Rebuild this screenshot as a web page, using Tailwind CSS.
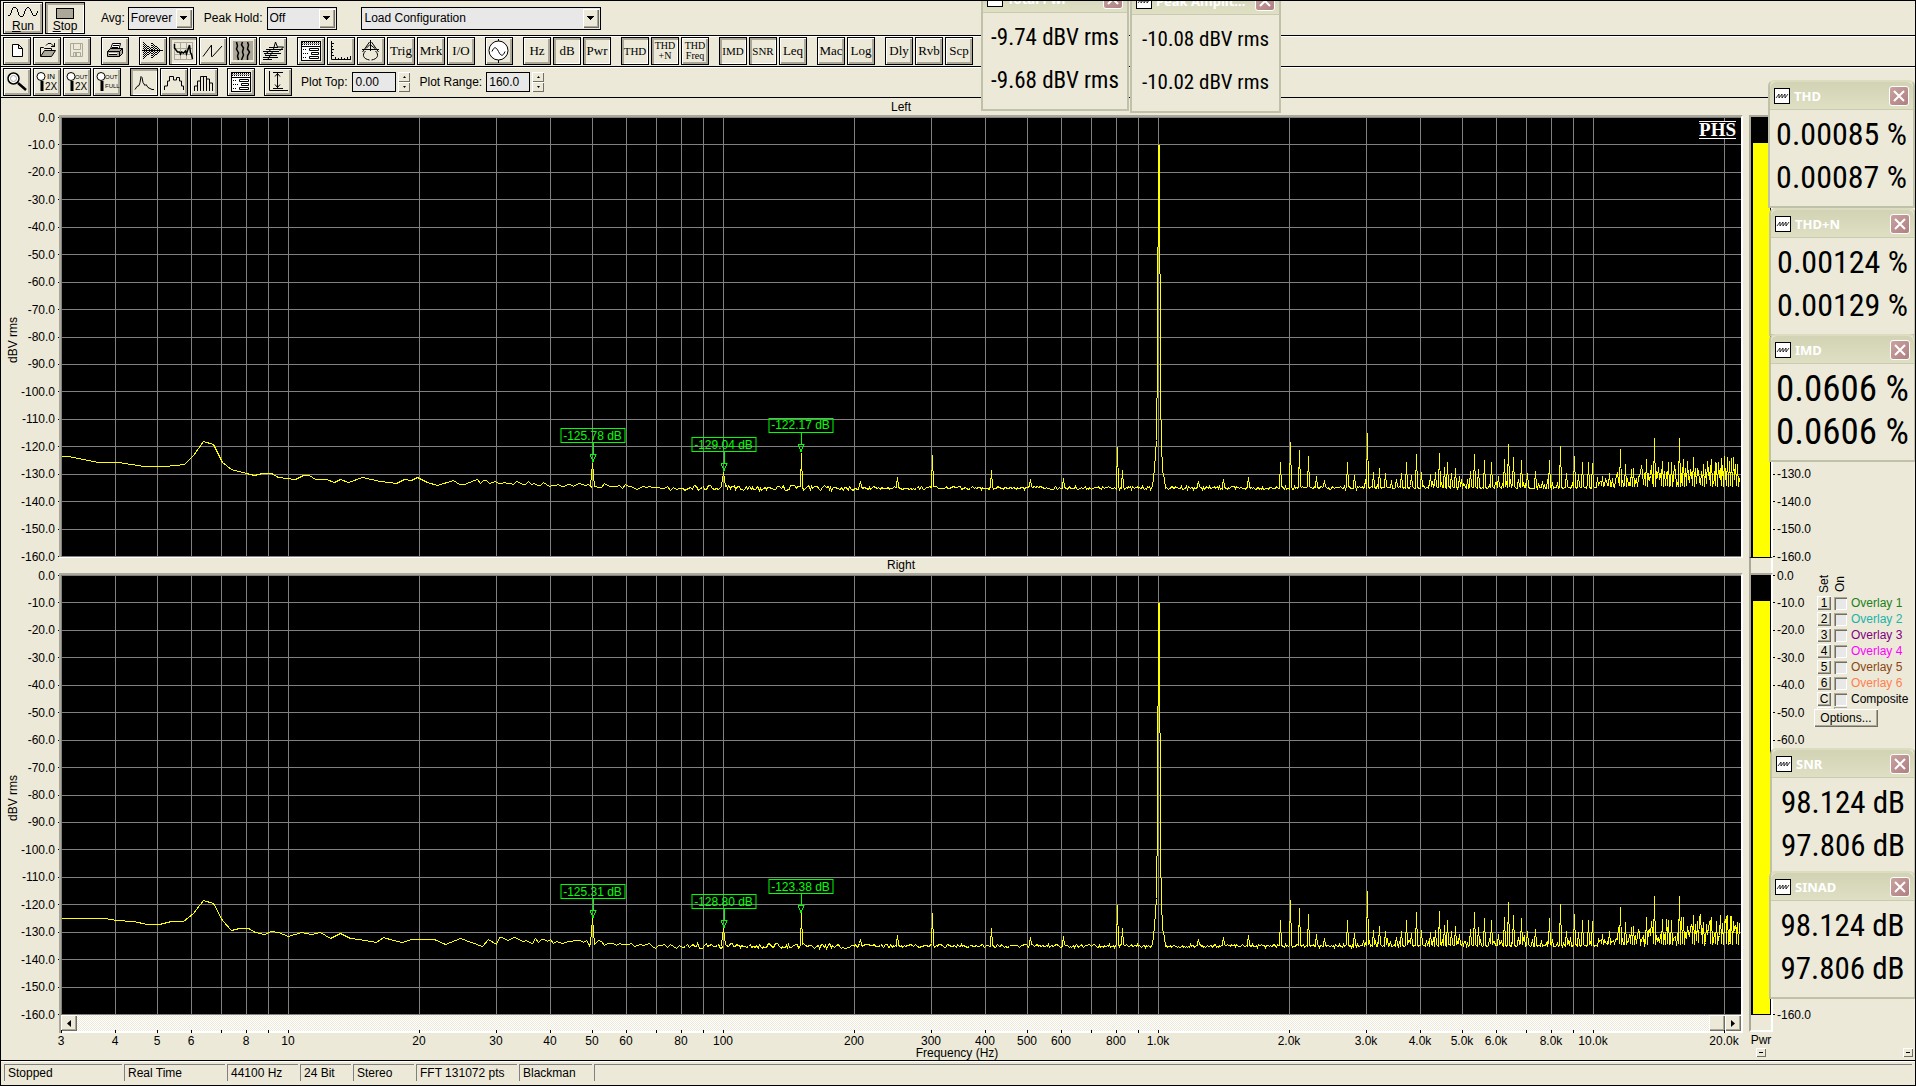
<!DOCTYPE html>
<html lang="en">

<head>
    <meta charset="UTF-8">
    <meta name="viewport" content="width=device-width, initial-scale=1.0">
    <title>Spectrum Analyzer</title>
    <script src="https://cdn.jsdelivr.net/npm/@tailwindcss/browser@4"></script>
</head>

<body class="bg-[#ece9d8]">
    <div class="relative h-screen flex flex-col overflow-hidden border border-black bg-[#ece9d8] font-['Liberation_Sans',Arial,sans-serif] text-[12px] leading-4 text-black">

        <!-- Row 1: run / stop and averaging -->
        <div class="flex h-[35px] shrink-0 items-center border-b border-black px-0.5">
            <button type="button" class="flex h-8 w-10 flex-col items-center border border-black shadow-[inset_1px_1px_0_#fff,inset_-2px_-2px_0_#aca899]">
                <svg class="h-4 w-8 shrink-0" viewBox="0 0 32 16" fill="none" stroke="#000" shape-rendering="crispEdges">
                    <path d="M1 13l2-1 3-7 2-1 2 2 2 6 2 2 2-1 3-7 2-2 2 2 3 6 1 1 2-1 2-4" />
                </svg>
                <span class="leading-3.5"><u>R</u>un</span>
            </button>
            <button type="button" class="ml-0.5 flex h-8 w-10 flex-col items-center border border-black shadow-[inset_2px_2px_0_#aca899,inset_-1px_-1px_0_#fff]">
                <span class="mt-[5px] h-[11px] w-[18px] shrink-0 border border-black bg-[#aca899]"></span>
                <span class="leading-3.5"><u>S</u>top</span>
            </button>
            <label for="avg" class="ml-4">Avg:</label>
            <div class="relative ml-[3px]">
                <select id="avg" class="block h-[23px] w-[66px] appearance-none border border-black bg-[#e8e8e8] pl-0.5">
                    <option>Forever</option>
                </select>
                <span class="pointer-events-none absolute right-0.5 top-0.5 flex h-[19px] w-4 items-center justify-center bg-[#ece9d8] shadow-[inset_1px_1px_0_#fff,inset_-1px_-1px_0_#716f64,inset_-2px_-2px_0_#aca899]">
                    <svg class="h-1 w-[7px]" viewBox="0 0 7 4" shape-rendering="crispEdges"><path d="M0 0h7L3.500 4z" /></svg>
                </span>
            </div>
            <label for="peak" class="ml-2.5">Peak Hold:</label>
            <div class="relative ml-1">
                <select id="peak" class="block h-[23px] w-[70px] appearance-none border border-black bg-[#e8e8e8] pl-0.5">
                    <option>Off</option>
                </select>
                <span class="pointer-events-none absolute right-0.5 top-0.5 flex h-[19px] w-4 items-center justify-center bg-[#ece9d8] shadow-[inset_1px_1px_0_#fff,inset_-1px_-1px_0_#716f64,inset_-2px_-2px_0_#aca899]">
                    <svg class="h-1 w-[7px]" viewBox="0 0 7 4" shape-rendering="crispEdges"><path d="M0 0h7L3.500 4z" /></svg>
                </span>
            </div>
            <div class="relative ml-6">
                <select aria-label="Load Configuration" class="block h-[23px] w-[240px] appearance-none border border-black bg-[#e8e8e8] pl-[3px]">
                    <option>Load Configuration</option>
                </select>
                <span class="pointer-events-none absolute right-0.5 top-0.5 flex h-[19px] w-4 items-center justify-center bg-[#ece9d8] shadow-[inset_1px_1px_0_#fff,inset_-1px_-1px_0_#716f64,inset_-2px_-2px_0_#aca899]">
                    <svg class="h-1 w-[7px]" viewBox="0 0 7 4" shape-rendering="crispEdges"><path d="M0 0h7L3.500 4z" /></svg>
                </span>
            </div>
        </div>

        <!-- Row 2: filled from the tools list -->
        <div id="tools" class="flex h-[31px] shrink-0 items-center gap-2.5 border-b border-black px-0.5 shadow-[inset_0_1px_0_#fff]"></div>

        <!-- Row 3: zoom, plot style and range -->
        <div class="flex h-[31px] shrink-0 items-center border-b border-black px-0.5 shadow-[inset_0_1px_0_#fff]">
            <div id="zoomTools" class="flex gap-[9px]"></div>
            <label for="plotTop" class="ml-[9px]">Plot Top:</label>
            <input id="plotTop" type="text" value="0.00" class="ml-[5px] h-5 w-11 border border-black bg-[#e8e8e8] px-0.5">
            <div class="ml-0.5 flex w-3 flex-col">
                <button type="button" aria-label="Top up" class="flex h-2.5 items-center justify-center shadow-[inset_1px_1px_0_#fff,inset_-1px_-1px_0_#716f64]"><svg class="h-0.5 w-[3px]" viewBox="0 0 3 2"><path d="M0 2h3L1.500 0z" /></svg></button>
                <button type="button" aria-label="Top down" class="flex h-2.5 items-center justify-center shadow-[inset_1px_1px_0_#fff,inset_-1px_-1px_0_#716f64]"><svg class="h-0.5 w-[3px]" viewBox="0 0 3 2"><path d="M0 0h3L1.500 2z" /></svg></button>
            </div>
            <label for="plotRange" class="ml-[9px]">Plot Range:</label>
            <input id="plotRange" type="text" value="160.0" class="ml-1 h-5 w-11 border border-black bg-[#e8e8e8] px-0.5">
            <div class="ml-0.5 flex w-3 flex-col">
                <button type="button" aria-label="Range up" class="flex h-2.5 items-center justify-center shadow-[inset_1px_1px_0_#fff,inset_-1px_-1px_0_#716f64]"><svg class="h-0.5 w-[3px]" viewBox="0 0 3 2"><path d="M0 2h3L1.500 0z" /></svg></button>
                <button type="button" aria-label="Range down" class="flex h-2.5 items-center justify-center shadow-[inset_1px_1px_0_#fff,inset_-1px_-1px_0_#716f64]"><svg class="h-0.5 w-[3px]" viewBox="0 0 3 2"><path d="M0 0h3L1.500 2z" /></svg></button>
            </div>
        </div>

        <!-- Plots, level meter and overlay panel -->
        <main class="grid min-h-0 flex-1 grid-cols-[58px_1fr_6px_24px_142px] grid-rows-[17px_1fr_16px_1fr_45px]">
            <h2 class="col-start-2 text-center leading-[18px]">Left</h2>

            <div class="col-start-1 row-start-2 flex">
                <span class="ml-1 mt-2 w-4 rotate-180 self-center text-center [writing-mode:vertical-rl]">dBV rms</span>
                <div data-scale="left" class="flex flex-1 flex-col justify-between pt-0.5"></div>
            </div>
            <div class="relative col-start-2 row-start-2 border-x-2 border-t-2 border-l-[#aca899] border-r-white border-t-[#aca899] bg-black">
                <svg data-plot="left" class="block h-full w-full" viewBox="0 0 1680 440" preserveAspectRatio="none" shape-rendering="crispEdges"></svg>
                <div data-markers="left" class="absolute inset-0"></div>
                <span class="absolute right-[5px] top-1 border-y border-white bg-black font-['Liberation_Serif',serif] text-[19px] font-bold leading-4 text-white">PHS</span>
            </div>
            <div class="col-start-4 row-start-2 flex flex-col border-x-2 border-t-2 border-l-[#aca899] border-r-white border-t-[#aca899] bg-black pr-px pl-0.5">
                <div class="h-[6%]"></div>
                <div class="flex-1 bg-[#ffff00]"></div>
            </div>
            <div data-scale="right" data-labels="13 14 15 16" class="col-start-5 row-start-2 flex flex-col justify-between pt-0.5"></div>

            <h2 class="col-start-2 row-start-3 border-t border-white text-center leading-3.5">Right</h2>
            <div class="col-start-4 row-start-3 border-x-2 border-t border-l-[#aca899] border-r-white border-t-black"></div>

            <div class="col-start-1 row-start-4 flex">
                <span class="ml-1 mt-2 w-4 rotate-180 self-center text-center [writing-mode:vertical-rl]">dBV rms</span>
                <div data-scale="left" class="flex flex-1 flex-col justify-between pt-0.5"></div>
            </div>
            <div class="relative col-start-2 row-start-4 border-x-2 border-t-2 border-l-[#aca899] border-r-white border-t-[#aca899] bg-black">
                <svg data-plot="right" class="block h-full w-full" viewBox="0 0 1680 440" preserveAspectRatio="none" shape-rendering="crispEdges"></svg>
                <div data-markers="right" class="absolute inset-0"></div>
            </div>
            <div class="col-start-4 row-start-4 flex flex-col border-x-2 border-t-2 border-l-[#aca899] border-r-white border-t-[#aca899] bg-black pr-px pb-px pl-0.5">
                <div class="h-[6%]"></div>
                <div class="flex-1 bg-[#ffff00]"></div>
            </div>
            <div class="col-start-5 row-start-4 flex">
                <div data-scale="right" data-labels="0 1 2 3 4 5 6 16" class="flex w-[41px] flex-col justify-between pt-0.5"></div>
                <div class="flex flex-col items-start">
                    <div class="flex h-[22px] items-center pl-0.5">
                        <span class="w-4 rotate-180 [writing-mode:vertical-rl]">Set</span>
                        <span class="w-4 rotate-180 [writing-mode:vertical-rl]">On</span>
                    </div>
                    <div id="overlays" class="flex flex-col pl-[3px]"></div>
                    <button type="button" class="relative h-[18px] w-16 bg-[#ece9d8] shadow-[inset_1px_1px_0_#fff,inset_-1px_-1px_0_#716f64,inset_-2px_-2px_0_#aca899]">Options...</button>
                </div>
            </div>

            <!-- Scroll bar and frequency axis -->
            <div class="col-start-2 row-start-5">
                <div class="flex h-4 border-x-2 border-l-[#aca899] border-r-white bg-[repeating-conic-gradient(#fff_0_25%,#ece9d8_0_50%)] bg-[length:2px_2px]">
                    <button type="button" aria-label="Scroll left" class="flex w-4 items-center justify-center bg-[#ece9d8] shadow-[inset_1px_1px_0_#fff,inset_-1px_-1px_0_#716f64,inset_-2px_-2px_0_#aca899]"><svg class="h-[7px] w-1" viewBox="0 0 4 7"><path d="M4 0v7L0 3.500z" /></svg></button>
                    <div class="flex-1"></div>
                    <div class="w-4 bg-[#ece9d8] shadow-[inset_1px_1px_0_#fff,inset_-1px_-1px_0_#716f64,inset_-2px_-2px_0_#aca899]"></div>
                    <button type="button" aria-label="Scroll right" class="flex w-4 items-center justify-center bg-[#ece9d8] shadow-[inset_1px_1px_0_#fff,inset_-1px_-1px_0_#716f64,inset_-2px_-2px_0_#aca899]"><svg class="h-[7px] w-1" viewBox="0 0 4 7"><path d="M0 0v7l4-3.500z" /></svg></button>
                </div>
                <div class="h-0.5 border-x-2 border-l-[#aca899] border-r-white bg-white"></div>
                <div id="freqAxis" class="relative mx-0.5 h-3.5"></div>
                <p class="pl-28 text-center leading-3">Frequency (Hz)</p>
            </div>
            <div class="col-start-4 row-start-5 flex flex-col items-center">
                <div class="h-[17px] w-full border-x-2 border-b-2 border-l-[#aca899] border-r-white border-b-white"></div>
                <span class="leading-4">Pwr</span>
                <button type="button" aria-label="Collapse meter" class="flex h-[9px] w-2.5 items-center justify-center shadow-[inset_1px_1px_0_#fff,inset_-1px_-1px_0_#716f64]"><span class="h-px w-1 bg-black"></span></button>
            </div>
            <div class="col-start-5 row-start-5 flex items-start justify-end pt-[33px] pr-0.5">
                <button type="button" aria-label="Collapse panel" class="flex h-[9px] w-2.5 items-center justify-center shadow-[inset_1px_1px_0_#fff,inset_-1px_-1px_0_#716f64]"><span class="h-px w-1 bg-black"></span></button>
            </div>
        </main>

        <!-- Status bar -->
        <footer class="flex h-[25px] shrink-0 gap-0.5 border-t border-black px-[3px] pt-[3px] pb-1 shadow-[inset_0_1px_0_#fff]">
            <span class="w-[118px] border-l border-t border-[#808080] pl-[3px]">Stopped</span>
            <span class="w-[101px] border-l border-t border-[#808080] pl-[3px]">Real Time</span>
            <span class="w-[71px] border-l border-t border-[#808080] pl-[3px]">44100 Hz</span>
            <span class="w-[51px] border-l border-t border-[#808080] pl-[3px]">24 Bit</span>
            <span class="w-[61px] border-l border-t border-[#808080] pl-[3px]">Stereo</span>
            <span class="w-[101px] border-l border-t border-[#808080] pl-[3px]">FFT 131072 pts</span>
            <span class="w-[73px] border-l border-t border-[#808080] pl-[3px]">Blackman</span>
            <span class="flex-1 border-l border-t border-[#808080]"></span>
        </footer>

        <!-- Floating readouts -->
        <div id="windows"></div>
    </div>

    <script>
        // Toolbar definitions: each inner array is one group
        const panelIcon = '<rect x="4.500" y="4.500" width="19" height="19" fill="#fff"/><path d="M5 5.500h18M5 7.500h18" stroke-dasharray="1 1"/><path d="M5 6.500h18" stroke="#aca899"/><path d="M5 9.500h18"/><path d="M12.500 11.500h9v2h-9zM14.500 15.500h7v2h-7zM12.500 19.500h9v2h-9z"/><path d="M6 12.500h4M6 16.500h6M6 20.500h4" stroke-dasharray="1 1"/>';
        const tools = [
            [
                { name: 'New', icon: '<path d="M9.500 7.500h6l4 4v8h-10zM15.500 7.500v4h4" fill="#fff"/>' },
                { name: 'Open', icon: '<path d="M7.500 19v-8.500h3l1 1h7V14" /><path d="M7.500 19.500l4-6h11l-4 6z" fill="#aca899"/><path d="M13 8.500l2-2h3l3 3M21.500 6v4M18 9.500h4"/>' },
                { name: 'Save', icon: '<g stroke="#aca899"><path d="M7.500 6.500h12v13h-12zM10.500 7v5.500h7V7M10.500 19.500v-4h7v4"/><path d="M12 17.500h2" stroke-width="3"/></g>' }
            ],
            [
                { name: 'Print', icon: '<path d="M9.500 12l2-5.500h8L18 12" fill="#fff"/><path d="M12 8.500h6M11 10.500h6"/><path d="M6.500 14.500l3-3h12v5l-3 3h-12z" fill="#aca899"/><path d="M6.500 14.500h12v5M18.500 14.500l3-3M8 17.500h8"/><path d="M8 16.500h8" stroke="#fff"/>' }
            ],
            [
                { name: 'Time series', icon: '<path d="M3 13.500h21"/><path d="M4.500 5v17M5.500 6v15M6.500 7v13M7.500 8v12M8.500 9v10M9.500 9v9M10.500 10v7M11.500 11v5M12.500 6v15M13.500 6v15M14.500 7v13M15.500 8v11M16.500 9v10M17.500 9v9M18.500 10v7M19.500 11v5M20.500 12v3" stroke-dasharray="1 1"/>' },
                { name: 'Spectrum', on: 1, icon: '<path d="M5.500 5v18M11.500 5v18M17.500 5v18M23.500 5v18M5 5.500h19M5 11.500h19M5 17.500h19M5 22.500h19" stroke="#aca899"/><path d="M5.500 7v4l3 4h2l1 2 1-2 2 1 2-2 1 3 3-9 1 8 1 1 1 5" stroke-width="1.500"/>' },
                { name: 'Phase', icon: '<path d="M4 19.500L12.500 8v11.500h1L23 9"/>' },
                { name: 'Spectrogram', icon: '<rect x="4" y="4" width="20" height="19" fill="#aca899" stroke="none"/><path d="M7.500 5l1 4-1 3 2 4-1 3 1 4M13.500 5l-1 3 2 3-1 4 1 3-2 5M18.500 5l1 3-1 4 2 3-2 4v4" stroke-width="1.500"/>' },
                { name: '3D surface', icon: '<path d="M10 10.500h9M7 12.500h17M8 14.500h12M5 16.500h17M6 18.500h12M4 20.500h15M4 22.500h9"/><path d="M4 14.500h5M14.500 12l2-7 2 5h6l-4 4M6 17.500l6-5M9 22l5-8"/>' }
            ],
            [
                { name: 'Options', icon: panelIcon },
                { name: 'Scaling', icon: '<path d="M4.500 4v18.500H24M5 6.500h2M5 9.500h1M5 12.500h2M5 15.500h1M5 18.500h2M8.500 22v-2M11.500 22v-1M14.500 22v-2M17.500 22v-1M20.500 22v-2M23.500 22v-3"/>' },
                { name: 'Calibration', icon: '<path d="M13.500 3v11M12.500 5l-7 10M14.500 5l7 10M5 12.500h17M9 11.500l4-4 5 4"/><path d="M8.500 14c-4 4-2 8 4 9M18.500 14c4 4 2 8-4 9"/>' },
                { name: 'Trig', text: 'Trig' }, { name: 'Markers', text: 'Mrk' }, { name: 'Devices', text: 'I/O' }
            ],
            [
                { name: 'Generator', icon: '<path d="M13.500 2v24"/><circle cx="13.500" cy="13.500" r="9.500" fill="#fff"/><path d="M7 14.500c2-5 4-5 6.500 0s4.500 5 6.500 0"/>' }
            ],
            [{ name: 'Hz', text: 'Hz' }, { name: 'dB', text: 'dB', on: 1 }, { name: 'Pwr', text: 'Pwr', on: 1 }],
            [{ name: 'THD', small: 'THD', on: 1 }, { name: 'THD+N', two: ['THD', '+N'], on: 1 }, { name: 'THD Freq', two: ['THD', 'Freq'] }],
            [{ name: 'IMD', small: 'IMD', on: 1 }, { name: 'SNR', small: 'SNR', on: 1 }, { name: 'Leq', text: 'Leq' }],
            [{ name: 'Macro', text: 'Mac' }, { name: 'Log', text: 'Log' }],
            [{ name: 'Delay', text: 'Dly' }, { name: 'Reverb', text: 'Rvb' }, { name: 'Scope', text: 'Scp' }]
        ];
        const lens = '<circle cx="8" cy="8.500" r="4" fill="#fff"/><path d="M9 13v10" stroke-width="3"/>';
        const iconText = (a, b) => `<g fill="#000" stroke="none" font-family="Liberation Sans"><text x="${a.length > 2 ? 12 : 14}" y="11" font-size="${a.length > 2 ? 6 : 8}">${a}</text><text x="12" y="${b.length > 2 ? 20 : 22}" font-size="${b.length > 2 ? 6 : 10}">${b}</text></g>`;
        const zoomTools = [
            [
                { name: 'Zoom', icon: '<circle cx="10.500" cy="10.500" r="5.500" fill="#fff" stroke-width="1.500"/><circle cx="10.500" cy="10.500" r="3" fill="none" stroke="#aca899"/><path d="M15 15l8 7" stroke-width="2.500"/>' },
                { name: 'Zoom in 2X', icon: lens + iconText('IN', '2X') },
                { name: 'Zoom out 2X', icon: lens + iconText('OUT', '2X') },
                { name: 'Zoom out full', icon: lens + iconText('OUT', 'FULL') }
            ],
            [
                { name: 'Line', on: 1, icon: '<path d="M5 21.500l2-3 2-1 1-3 1-6 1 1 1 5 2 3 1-1 2 3 4 2h2"/>' },
                { name: 'Steps', icon: '<path d="M4.500 22v-4h3v-5h2V8.500h4V12h3V9.500h3V13h2v5h2v4"/>' },
                { name: 'Bars', icon: '<path d="M4.500 23v-5h3v-5h3V8.500h3h3V11h3v4h3v8M7.500 23V13M10.500 23V9M13.500 23V8M16.500 23V8M19.500 23V14"/>' }
            ],
            [{ name: 'Display options', icon: panelIcon }],
            [{ name: 'Autoscale', icon: '<path d="M5.500 3v19.500H24M9 4.500h10M9 20.500h10M13.500 5v15M11 8.500l2.500-3 2.500 3M11 16.500l2.500 3 2.500-3"/>' }]
        ];

        function toolButton(t) {
            const edge = t.on
                ? 'shadow-[inset_2px_2px_0_#aca899,inset_-1px_-1px_0_#fff]'
                : 'shadow-[inset_1px_1px_0_#fff,inset_-2px_-2px_0_#aca899]';
            let inner;
            if (t.icon) inner = `<svg class="h-[26px] w-[26px] shrink-0" viewBox="1 1 26 26" fill="none" stroke="#000">${t.icon}</svg>`;
            else if (t.two) inner = `<span class="flex flex-col text-[10px] leading-[10px]"><span>${t.two[0]}</span><span>${t.two[1]}</span></span>`;
            else if (t.small) inner = `<span class="text-[11px]">${t.small}</span>`;
            else inner = `<span class="text-[13px]">${t.text}</span>`;
            return `<button type="button" aria-label="${t.name}" class="flex h-7 w-7 items-center justify-center border border-black font-['Liberation_Serif',serif] ${edge}">${inner}</button>`;
        }
        const groups = list => list.map(g => `<div class="flex gap-0.5">${g.map(toolButton).join('')}</div>`).join('');
        document.getElementById('tools').innerHTML = groups(tools);
        document.getElementById('zoomTools').innerHTML = groups(zoomTools);

        // dB scales; the right one only labels what the readouts leave free
        document.querySelectorAll('[data-scale]').forEach(el => {
            const only = el.dataset.labels ? el.dataset.labels.split(' ').map(Number) : null;
            for (let i = 0; i <= 16; i++) {
                const text = !only || only.includes(i) ? (i ? -i * 10 : 0).toFixed(1) : '';
                el.innerHTML += el.dataset.scale === 'left'
                    ? `<div class="flex h-px items-center justify-end gap-[3px]"><span>${text}</span><span class="h-px w-px bg-black"></span></div>`
                    : `<div class="flex h-px items-center gap-0.5"><span class="h-px w-0.5 bg-black"></span><span>${text}</span></div>`;
            }
        });

        // Log frequency axis, 3 Hz at the left edge
        const fx = f => Math.round(227 + 435 * Math.log10(f / 10)) + 0.5;
        const freqs = [];
        for (let d = 1; d <= 10000; d *= 10) {
            for (let k = 1; k < 10; k++) {
                if (k * d >= 3 && k * d <= 20000) freqs.push(k * d);
            }
        }
        let axis = '';
        freqs.forEach(f => {
            const left = (fx(f) - 0.5) / 16.8;
            const lead = Number(String(f)[0]);
            axis += `<span class="absolute -top-[3px] h-[3px] w-px bg-black" style="left:${left}%"></span>`;
            if (lead !== 7 && lead !== 9) {
                const text = f >= 1000 ? (f / 1000).toFixed(1) + 'k' : f;
                axis += `<span class="absolute top-0 -translate-x-1/2" style="left:${left}%">${text}</span>`;
            }
        });
        document.getElementById('freqAxis').innerHTML = axis;

        // Spectrum data in plot units (1680 x 440)
        const lowEnd = {
            left: [[0, 339], [7, 339], [17, 341], [37, 345], [57, 345], [83, 349], [104, 349], [123, 347], [132, 338], [142, 324], [152, 327], [161, 345], [170, 352], [185, 356], [193, 358], [201, 356], [210, 356], [217, 360], [234, 362], [242, 358], [248, 358], [254, 362], [265, 362], [273, 365], [279, 362], [287, 365], [301, 360], [319, 364], [335, 366], [343, 362], [350, 363], [356, 360], [366, 365], [376, 368], [392, 363], [398, 367], [403, 367], [413, 363]],
            right: [[0, 343], [43, 343], [55, 345], [72, 346], [86, 349], [98, 349], [110, 346], [122, 346], [132, 338], [142, 325], [152, 328], [161, 345], [170, 355], [178, 353], [187, 353], [194, 357], [203, 359], [210, 356], [217, 357], [227, 361], [240, 357], [250, 359], [259, 357], [269, 363], [279, 358], [289, 363], [297, 364], [315, 367], [322, 362], [332, 365], [341, 367], [350, 364], [373, 364], [384, 369], [399, 363], [410, 367], [421, 371], [427, 364], [435, 369]]
        };
        const hum = {
            left: [[531, 346], [662, 355], [740, 336]],
            right: [[531, 343], [662, 353], [740, 338]]
        };
        const peaks = [[799, 364], [836, 360], [871, 338], [930, 353], [969, 362], [1002, 361], [1056, 330], [1061, 353], [1137, 364], [1162, 362], [1187, 360], [1219, 345], [1229, 325], [1238, 333], [1247, 339], [1255, 359], [1263, 363], [1286, 345], [1293, 358], [1306, 316], [1312, 355], [1318, 351], [1324, 356], [1335, 362], [1340, 356], [1345, 345], [1350, 358], [1355, 337], [1360, 355], [1369, 357], [1374, 355], [1378, 336], [1383, 350], [1386, 345], [1390, 356], [1394, 351], [1398, 359], [1409, 354], [1413, 337], [1417, 352], [1423, 343], [1430, 345], [1437, 359], [1443, 342], [1447, 327], [1452, 340], [1457, 362], [1460, 343], [1466, 356], [1474, 354], [1488, 343], [1499, 329], [1505, 356], [1513, 339], [1517, 357], [1521, 345], [1527, 345], [1531, 346], [1541, 359], [1548, 356], [1559, 332], [1564, 347], [1570, 352], [1572, 351], [1585, 342], [1593, 321], [1601, 344], [1607, 345], [1610, 345], [1618, 321], [1622, 342], [1632, 340], [1642, 347], [1650, 342], [1655, 346], [1661, 348], [1666, 340], [1670, 341], [1676, 347]];
        const carrier = [[1091, 369], [1093, 351], [1095, 323], [1096, 240], [1097, 28], [1098, 28], [1099, 280], [1100, 325], [1101, 353], [1103, 362], [1104, 371]];

        function trace(side) {
            let seed = side === 'left' ? 7 : 23;
            const rnd = () => (seed = (seed * 16807) % 2147483647) / 2147483647;
            const pts = lowEnd[side].slice();
            const tips = new Map([...hum[side], ...peaks]);
            const start = pts[pts.length - 1][0];
            for (let x = start + 3; x < 1679; x++) {
                if (x >= 1091 && x <= 1104) {
                    if (x === 1091) pts.push(...carrier);
                    continue;
                }
                if (tips.has(x)) {
                    const wide = x < 700 ? 2 : 1;
                    pts.push([x - wide, 368], [x, tips.get(x)], [x + wide, 369]);
                    x += wide;
                    continue;
                }
                const base = x < 580 ? 364 + (x - start) / 28 : 370.5;
                const wobble = x < 800 ? 5 : x < 1300 ? 3 : 2;
                let y = Math.min(base, 370.5) + (rnd() - 0.5) * wobble;
                if (x > 1300 && rnd() < 0.3) y -= rnd() * 9;
                if (x > 1535) y -= rnd() * (x - 1490) / 6;
                if (x > 1625) y -= rnd() * 5;
                pts.push([x, Math.round(y)]);
                // Points are further apart at low frequencies, but never step over a peak
                const skip = x < 620 ? 2 : x < 1000 && rnd() < 0.5 ? 1 : 0;
                for (let s = 0; s < skip && !tips.has(x + 1); s++) x++;
            }
            return pts.map(p => `${p[0] + 0.5},${p[1] + 0.5}`).join(' ');
        }

        document.querySelectorAll('[data-plot]').forEach(svg => {
            let grid = '';
            for (let i = 0; i <= 16; i++) grid += `M0 ${Math.round(i * 439 / 16) + 0.5}H1680`;
            freqs.forEach(f => grid += `M${fx(f)} 0V440`);
            svg.innerHTML = `<path d="${grid}" stroke="#808080" fill="none" vector-effect="non-scaling-stroke"/>
                <polyline points="${trace(svg.dataset.plot)}" stroke="#ffff00" fill="none" vector-effect="non-scaling-stroke"/>`;
        });

        // Peak markers
        const markers = {
            left: [[531.5, 311, '-125.78 dB'], [662.5, 320, '-129.04 dB'], [739.5, 301, '-122.17 dB']],
            right: [[531.5, 309, '-125.31 dB'], [662.5, 319, '-128.80 dB'], [739.5, 304, '-123.38 dB']]
        };
        document.querySelectorAll('[data-markers]').forEach(el => {
            el.innerHTML = markers[el.dataset.markers].map(([x, y, text]) => `
                <div class="absolute flex w-[65px] -translate-x-1/2 flex-col items-center text-[#00ff00]" style="left:${x / 16.8}%;top:${y / 4.4}%">
                    <span class="flex h-[15px] w-full items-center justify-center whitespace-nowrap border border-[#00ff00]">${text}</span>
                    <svg class="h-5 w-[7px]" viewBox="0 0 7 20" fill="none" stroke="#00ff00" shape-rendering="crispEdges"><path d="M3.500 0v12M0 11.500h7M.5 11.500l3 7 3-7"/></svg>
                </div>`).join('');
        });

        // Overlay rows
        const overlays = [
            ['1', 'Overlay 1', 'text-[#1a801a]'], ['2', 'Overlay 2', 'text-[#20b2aa]'], ['3', 'Overlay 3', 'text-[#800080]'],
            ['4', 'Overlay 4', 'text-[#ff00ff]'], ['5', 'Overlay 5', 'text-[#8b4513]'], ['6', 'Overlay 6', 'text-[#ff7f50]'],
            ['C', 'Composite', 'text-black']
        ];
        document.getElementById('overlays').innerHTML = overlays.map(([key, text, color]) => `
            <div class="flex h-4 items-center">
                <button type="button" aria-label="Set ${text}" class="h-3.5 w-3.5 leading-3 shadow-[inset_1px_1px_0_#fff,inset_-1px_-1px_0_#716f64,inset_-2px_-2px_0_#aca899]">${key}</button>
                <input id="ov${key}" type="checkbox" class="ml-[3px] h-[13px] w-[13px] appearance-none bg-[#e8e8e8] shadow-[inset_1px_1px_0_#aca899,inset_2px_2px_0_#716f64,inset_-1px_-1px_0_#fff]">
                <label for="ov${key}" class="ml-1 whitespace-nowrap ${color}">${text}</label>
            </div>`).join('') + `
            <div class="flex h-0.5 overflow-hidden">
                <span class="h-3.5 w-3.5 shadow-[inset_1px_1px_0_#fff]"></span>
                <span class="ml-[3px] h-3.5 w-[13px] bg-[#e8e8e8] shadow-[inset_1px_1px_0_#aca899]"></span>
            </div>`;

        // Floating readout windows
        const windows = [
            { title: 'Total Pwr', values: ['-9.74 dBV rms', '-9.68 dBV rms'], place: 'left-[980px] -top-[18px]', width: 'w-[148px]', size: 'text-[23px]' },
            { title: 'Peak Amplit...', values: ['-10.08 dBV rms', '-10.02 dBV rms'], place: 'left-[1129px] -top-4', width: 'w-[151px]', size: 'text-[21px]' },
            { title: 'THD', values: ['0.00085 %', '0.00087 %'], place: 'right-0 top-[79px]', width: 'w-[147px]', size: 'text-[32px]' },
            { title: 'THD+N', values: ['0.00124 %', '0.00129 %'], place: '-right-px top-[207px]', width: 'w-[147px]', size: 'text-[32px]' },
            { title: 'IMD', values: ['0.0606 %', '0.0606 %'], place: '-right-px top-[333px]', width: 'w-[147px]', size: 'text-[37px]' },
            { title: 'SNR', values: ['98.124 dB', '97.806 dB'], place: '-right-px top-[747px]', width: 'w-[146px]', size: 'text-[31px]' },
            { title: 'SINAD', values: ['98.124 dB', '97.806 dB'], place: '-right-px top-[870px]', width: 'w-[147px]', size: 'text-[31px]' }
        ];
        document.getElementById('windows').innerHTML = windows.map(w => `
            <section class="absolute ${w.place} ${w.width} flex h-[128px] flex-col rounded-t-md border-2 border-[#bfc1a8] border-t-[#dcdcc0] bg-[#ece9d8]">
                <header class="flex h-[27px] shrink-0 items-center rounded-t-md bg-linear-to-b from-[#d2d3b4] to-[#dfdfc4] pr-1 pl-1 font-['Noto_Sans','Open_Sans',sans-serif] text-[13px] font-bold text-white">
                    <svg class="h-4 w-4 shrink-0" viewBox="0 0 16 16" fill="none" stroke="#000"><rect x=".5" y=".5" width="15" height="15" fill="#fff"/><path d="M2 10l3-4v4l3-4v4l3-4v4l3-4" stroke-width=".8"/></svg>
                    <h3 class="ml-1 flex-1 whitespace-nowrap">${w.title}</h3>
                    <button type="button" aria-label="Close ${w.title}" class="flex h-5 w-5 shrink-0 items-center justify-center rounded-[3px] border border-white bg-linear-to-br from-[#c8a3a0] to-[#b07f82]">
                        <svg class="h-3 w-3" viewBox="0 0 12 12" stroke="#fff" stroke-width="2"><path d="M1 1l10 10M11 1L1 11"/></svg>
                    </button>
                </header>
                <div class="flex-1 border-t border-[#c9cab0] pt-[3px] text-center font-['Liberation_Sans_Narrow','Roboto_Condensed','Noto_Sans_Condensed','Liberation_Sans',sans-serif] whitespace-nowrap ${w.size}">
                    ${w.values.map(v => `<p class="leading-[43px]">${v}</p>`).join('')}
                </div>
            </section>`).join('');
    </script>
</body>

</html>
